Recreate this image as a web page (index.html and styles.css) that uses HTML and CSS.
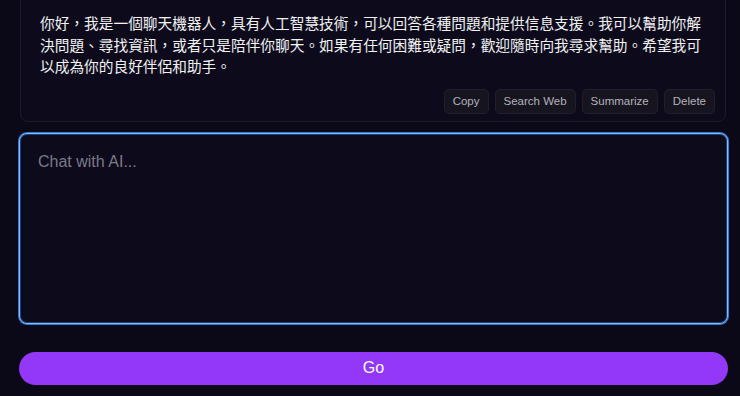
FILE: index.html
```html
<!DOCTYPE html>
<html>
<head>
  <title>Chat with AI</title>
  <link rel="stylesheet" href="styles.css">
</head>
<body>
  <div class="container">
    <div class="message">
      <p class="message-text">你好，我是一個聊天機器人，具有人工智慧技術，可以回答各種問題和提供信息支援。我可以幫助你解決問題、尋找資訊，或者只是陪伴你聊天。如果有任何困難或疑問，歡迎隨時向我尋求幫助。希望我可以成為你的良好伴侶和助手。</p>
      <div class="actions">
        <button class="action-btn">Copy</button>
        <button class="action-btn">Search Web</button>
        <button class="action-btn">Summarize</button>
        <button class="action-btn">Delete</button>
      </div>
    </div>
    <textarea class="chat-input" placeholder="Chat with AI..."></textarea>
    <button class="go-btn">Go</button>
  </div>
</body>
</html>
```

FILE: styles.css
```css
body {
  margin: 0;
  padding: 0;
  background-color: #0b0918;
  font-family: 'Liberation Sans', Arial, 'Noto Sans CJK TC', sans-serif;
  height: 396px;
  overflow: hidden;
}

.container {
  display: flex;
  flex-direction: column;
  padding: 0 12px 0 19px;
}

.message {
  margin: -12px 2px 0 1px;
  padding: 23px 10px 7px 19px;
  background-color: #0d0b1b;
  border: 1px solid #1e1b2b;
  border-radius: 8px;
}

.message-text {
  margin: 0 9px 0 0;
  color: #f2f2f5;
  font-family: 'Noto Sans CJK TC', 'Noto Sans CJK SC', sans-serif;
  font-size: 14.7px;
  line-height: 21.5px;
}

.actions {
  display: flex;
  justify-content: flex-end;
  gap: 6px;
  margin-top: 12px;
}

.action-btn {
  height: 25px;
  padding: 0 8px;
  background-color: #16141f;
  color: #b4b3bc;
  border: 1px solid #221f2d;
  border-radius: 5px;
  font-family: 'Liberation Sans', Arial, sans-serif;
  font-size: 11.5px;
  cursor: pointer;
}

.chat-input {
  margin-top: 11px;
  height: 191px;
  box-sizing: border-box;
  padding: 18px 18px;
  background-color: #0c0a1b;
  border: 1px solid #82bcf8;
  box-shadow: 0 0 0 1px #3578d6, inset 0 0 0 1px #1d3f7a;
  border-radius: 8px;
  color: #e8e8ee;
  font-family: 'Liberation Sans', Arial, sans-serif;
  font-size: 16px;
  line-height: 20px;
  resize: none;
  outline: none;
}

.chat-input::placeholder {
  color: #7c7a88;
}

.go-btn {
  margin-top: 28px;
  height: 33px;
  background-color: #9338f8;
  color: #ffffff;
  border: none;
  border-radius: 17px;
  font-family: 'Liberation Sans', Arial, sans-serif;
  font-size: 16px;
  cursor: pointer;
}
```
